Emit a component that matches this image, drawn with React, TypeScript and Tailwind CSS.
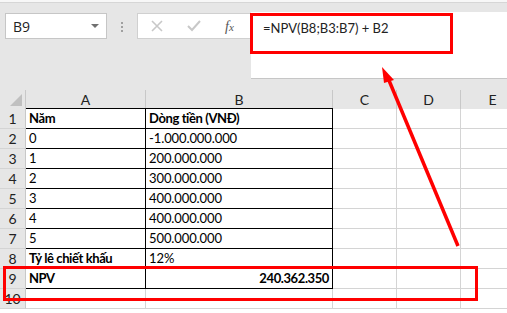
import React from "react";

const cols = [
  { key: "A", w: 120 },
  { key: "B", w: 187 },
  { key: "C", w: 64 },
  { key: "D", w: 64 },
  { key: "E", w: 64 },
];

type Cell = { t?: string; bold?: boolean; right?: boolean };
const rows: Cell[][] = [
  [{ t: "Năm", bold: true }, { t: "Dòng tiền (VNĐ)", bold: true }],
  [{ t: "0" }, { t: "-1.000.000.000" }],
  [{ t: "1" }, { t: "200.000.000" }],
  [{ t: "2" }, { t: "300.000.000" }],
  [{ t: "3" }, { t: "400.000.000" }],
  [{ t: "4" }, { t: "400.000.000" }],
  [{ t: "5" }, { t: "500.000.000" }],
  [{ t: "Tỷ lê chiết khấu", bold: true }, { t: "12%" }],
  [{ t: "NPV", bold: true }, { t: "240.362.350", bold: true, right: true }],
  [{}, {}],
];

export default function App() {
  return (
    <div
      className="relative w-[507px] h-[313px] overflow-hidden bg-white"
      style={{ fontFamily: "'Segoe UI', 'Open Sans', sans-serif" }}
    >
      {/* top strip */}
      <div className="h-[3px] bg-[#f7f7f7] border-b border-[#d6d6d6]" />
      {/* toolbar */}
      <div className="h-[87px] bg-[#e6e6e6] flex items-start pt-[10px]">
        <div className="ml-[5px] w-[102px] h-[26px] bg-white border border-[#c6c6c6] flex items-center pl-[7px] pr-[7px]">
          <span className="text-[14px] text-[#222] flex-1" style={{ fontFamily: "'Open Sans', sans-serif" }}>B9</span>
          <span className="w-0 h-0 border-l-[4px] border-r-[4px] border-t-[4px] border-l-transparent border-r-transparent border-t-[#707070]" />
        </div>
        <div className="w-[30px] flex flex-col items-center gap-[2px] pt-[9px]">
          <span className="w-[2px] h-[2px] bg-[#a0a0a0]" />
          <span className="w-[2px] h-[2px] bg-[#a0a0a0]" />
          <span className="w-[2px] h-[2px] bg-[#a0a0a0]" />
        </div>
        <div className="w-[114px] h-[26px] bg-white border border-[#d0d0d0] border-r-0 flex items-center">
          <svg width="12" height="12" viewBox="0 0 12 12" className="ml-[13px]">
            <path d="M1 1 L11 11 M11 1 L1 11" stroke="#c8c8c8" strokeWidth="1.6" />
          </svg>
          <svg width="14" height="12" viewBox="0 0 14 12" className="ml-[24px]">
            <path d="M1 6 L5 10 L13 1" stroke="#c8c8c8" strokeWidth="2" fill="none" />
          </svg>
          <span
            className="ml-[24px] text-[14px] italic text-[#555]"
            style={{ fontFamily: "'Liberation Serif', serif" }}
          >
            f<span className="text-[11px]">x</span>
          </span>
        </div>
        <div className="flex-1 h-[67px] -mt-[1px] bg-white border-b border-[#c6c6c6] pl-[12px] pt-[3px]">
          <span className="text-[13px] text-[#222]" style={{ fontFamily: "'Lato', sans-serif" }}>
            =NPV(B8;B3:B7) + B2
          </span>
        </div>
      </div>

      {/* grid */}
      <div style={{ fontFamily: "'Lato', sans-serif" }}>
        {/* column headers */}
        <div className="flex h-[19px] bg-[#e6e6e6]">
          <div className="w-[26px] shrink-0 relative border-r border-[#c8c8c8]">
            <svg width="12" height="12" className="absolute right-[3px] bottom-[3px]">
              <path d="M12 0 L12 12 L0 12 Z" fill="#c0c0c0" />
            </svg>
          </div>
          {cols.map((c) => (
            <div
              key={c.key}
              style={{ width: c.w }}
              className="shrink-0 border-r border-[#c8c8c8] flex items-center justify-center text-[14px] text-[#222]"
            >
              {c.key}
            </div>
          ))}
        </div>
        {rows.map((r, i) => (
          <div key={i} className="flex h-[20px]">
            <div className="w-[26px] shrink-0 bg-[#e6e6e6] border-r border-[#c8c8c8] border-b border-b-[#d4d4d4] flex items-center justify-center text-[14px] text-[#222]">
              {i + 1}
            </div>
            {cols.map((c, j) => {
              const inTable = j < 2 && i < 9;
              const cell = r[j] || {};
              let cls = "shrink-0 flex items-center px-[3px] text-[13px] text-black whitespace-nowrap ";
              if (inTable) {
                cls += "border-b border-r border-black ";
                if (i === 0) cls += "border-t ";
              } else {
                cls += "border-b border-r border-[#d4d4d4] ";
              }
              if (cell.bold) cls += "font-bold tracking-[-0.4px] ";
              else cls += "tracking-[-0.1px] ";
              if (cell.right) cls += "justify-end ";
              return (
                <div
                  key={c.key}
                  style={{ width: c.w, marginTop: inTable && i === 0 ? -1 : 0, height: inTable && i === 0 ? 21 : 20 }}
                  className={cls}
                >
                  {cell.t}
                </div>
              );
            })}
          </div>
        ))}
      </div>

      {/* annotations */}
      <div className="absolute left-[250px] top-[13px] w-[203px] h-[41px] border-[3px] border-[#ff0000]" />
      <div className="absolute left-[3px] top-[266px] w-[475px] h-[35px] border-[3px] border-[#ff0000]" />
      <svg className="absolute left-0 top-0" width="507" height="313">
        <line x1="458" y1="246" x2="388" y2="78" stroke="#ff0000" strokeWidth="3.5" />
        <path d="M382 67 L394 80 L384 83 Z" fill="#ff0000" />
      </svg>
    </div>
  );
}
